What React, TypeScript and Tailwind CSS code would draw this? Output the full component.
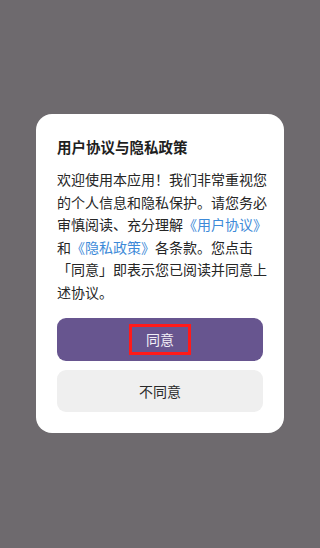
export default function App() {
  const font = { fontFamily: '"Noto Sans CJK SC", "Noto Sans", sans-serif' };
  return (
    <div
      className="w-[320px] h-[548px] bg-[#6e6a6e] flex justify-center pt-[114px]"
      style={font}
    >
      <div className="w-[248px] h-[319px] bg-white rounded-[16px] px-[21px] pt-[22px] pb-[21px] flex flex-col">
        <h2 className="text-[14.5px] leading-[22px] font-bold text-[#1f1f1f]">
          用户协议与隐私政策
        </h2>
        <p className="mt-[10px] w-[212px] whitespace-nowrap text-[14px] leading-[22.5px] text-[#262626]">
          欢迎使用本应用！我们非常重视您
          <br />
          的个人信息和隐私保护。请您务必
          <br />
          审慎阅读、充分理解<span className="text-[#3d8ad8]">《用户协议》</span>
          <br />
          和<span className="text-[#3d8ad8]">《隐私政策》</span>各条款。您点击
          <br />
          「同意」即表示您已阅读并同意上
          <br />
          述协议。
        </p>
        <div className="mt-auto flex flex-col gap-[9px]">
          <button className="h-[43px] rounded-[9px] bg-[#67558f] flex items-center justify-center">
            <span className="w-[62px] h-[31px] border-[3px] border-[#ff1a1a] flex items-center justify-center text-[14px] text-[#f1eef6]">
              同意
            </span>
          </button>
          <button className="h-[42px] rounded-[9px] bg-[#efefef] flex items-center justify-center text-[14px] text-[#2a2a2a]">
            不同意
          </button>
        </div>
      </div>
    </div>
  );
}
